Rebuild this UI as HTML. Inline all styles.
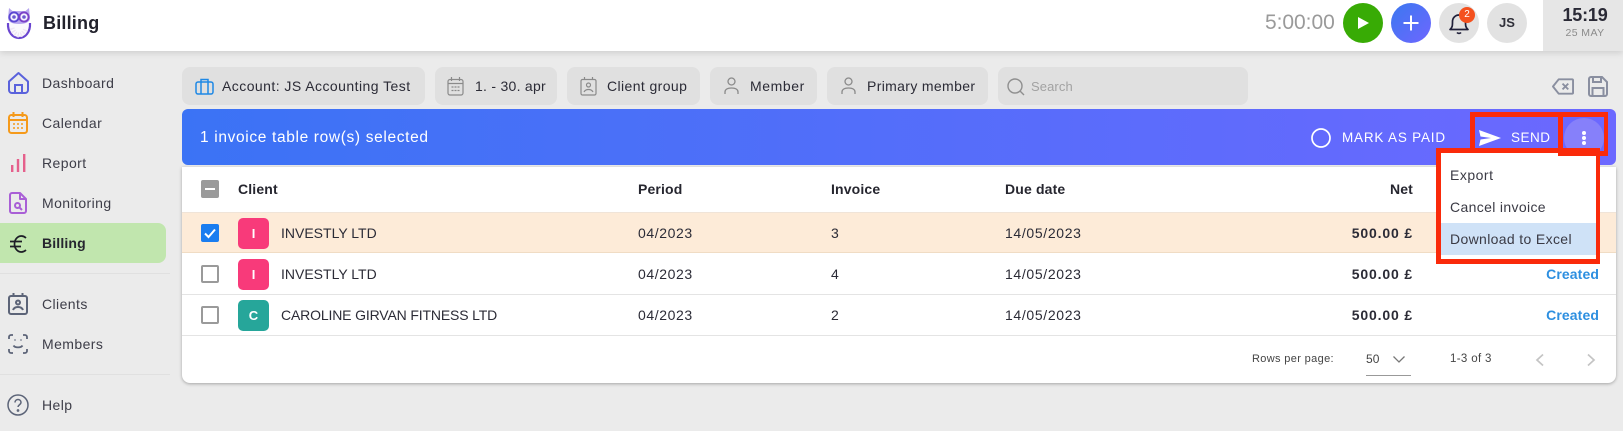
<!DOCTYPE html>
<html><head><meta charset="utf-8"><style>
html,body{margin:0;padding:0;width:1623px;height:431px;overflow:hidden;background:#ebebeb;font-family:"Liberation Sans",sans-serif;color:#2b2b36}
.a{position:absolute;white-space:nowrap}
.t{position:absolute;white-space:nowrap;line-height:20px;font-size:14px;letter-spacing:.45px}
.nav{left:42px;color:#3d3d48;font-size:14px;letter-spacing:.42px}
.chip{position:absolute;top:67px;height:38px;background:#e0e0e0;border-radius:8px}
.hd{font-weight:bold;letter-spacing:.15px;color:#26262f}
.r{text-align:right}
.av{position:absolute;left:238px;width:31px;height:31px;border-radius:5px;color:#fff;font-weight:bold;font-size:13px;line-height:31px;text-align:center}
.cb{position:absolute;left:201px;width:14px;height:14px;border:2px solid #9a9a9a;border-radius:2px;background:#fff}
svg{position:absolute;overflow:visible}
.red{position:absolute;background:#fa2a0a}
</style></head><body>
<div class="a" style="left:0;top:0;width:1623px;height:51px;background:#fff;box-shadow:0 2px 6px rgba(0,0,0,.12)"></div>
<div class="a" style="left:1543px;top:0;width:80px;height:51px;background:#e6e6e6"></div>

<svg style="left:6px;top:8px" width="26" height="32" viewBox="0 0 26 32">
<path d="M2 15c-.5 9 4.500 15 11 15s11.500-6 11-15" fill="#fbf9fd" stroke="#6a45d0" stroke-width="2.200"/>
<path d="M6 20c1 4 4 7 7 7s6-3 7-7" fill="none" stroke="#efe6f4" stroke-width="5" stroke-dasharray="1.500 1.500"/>
<path d="M3 0l3.500 3h13L23 0l1 10c0 4-4 6-11 6S2 14 2 10z" fill="#b7a6ee"/>
<circle cx="8" cy="9" r="4.600" fill="#f4f1fd" stroke="#5b46d2" stroke-width="1.900"/><circle cx="18" cy="9" r="4.600" fill="#f4f1fd" stroke="#7a40c8" stroke-width="1.900"/>
<circle cx="8" cy="9" r="1.800" fill="#6a5ad0"/><circle cx="18" cy="9" r="1.800" fill="#6a5ad0"/>
</svg>
<div class="t" style="left:43px;top:13px;font-size:18px;font-weight:bold;letter-spacing:.2px;color:#22222c">Billing</div>

<div class="t" style="left:1265px;top:11px;font-size:21px;letter-spacing:-.05px;line-height:24px;color:#9a9a9a">5:00:00</div>
<div class="a" style="left:1343px;top:3px;width:40px;height:40px;border-radius:50%;background:#38ab05"></div>
<svg style="left:1343px;top:3px" width="40" height="40"><path d="M15 14v12l11-6z" fill="#fff"/></svg>
<div class="a" style="left:1391px;top:3px;width:40px;height:40px;border-radius:50%;background:linear-gradient(135deg,#3b78f0,#6e66ff)"></div>
<svg style="left:1391px;top:3px" width="40" height="40"><path d="M20 12.500v15M12.500 20h15" stroke="#fff" stroke-width="2" fill="none"/></svg>
<div class="a" style="left:1439px;top:3px;width:40px;height:40px;border-radius:50%;background:#e2e2e2"></div>
<svg style="left:1439px;top:3px" width="40" height="40"><path d="M11 26.500c2.500-2 2.500-4 2.500-8a6.500 6.500 0 0 1 13 0c0 4 0 6 2.500 8z" fill="none" stroke="#20203a" stroke-width="1.700" stroke-linejoin="round"/><path d="M18 29.500c1 1.200 3 1.200 4 0" fill="none" stroke="#20203a" stroke-width="1.700"/></svg>
<div class="a" style="left:1459px;top:7px;width:16px;height:16px;border-radius:50%;background:#f4511e;color:#fff;font-size:10px;line-height:16px;text-align:center">2</div>
<div class="a" style="left:1487px;top:3px;width:40px;height:40px;border-radius:50%;background:#e2e2e2;font-size:13px;font-weight:bold;line-height:40px;text-align:center;color:#30303a">JS</div>
<div class="t" style="left:1545px;width:80px;top:4px;text-align:center;font-size:18px;font-weight:bold;line-height:22px;letter-spacing:-.2px;color:#2a2a36">15:19</div>
<div class="t" style="left:1545px;width:80px;top:23px;text-align:center;font-size:10.500px;letter-spacing:.4px;color:#8b8b8b">25 MAY</div>

<svg style="left:8px;top:72px" width="21" height="22" viewBox="0 0 21 22" fill="none" stroke="#5a62dc" stroke-width="2"><path d="M1 9.500L10.500 1 20 9.500V18a3 3 0 0 1-3 3H4a3 3 0 0 1-3-3z" stroke-linejoin="round"/><path d="M7 21v-8h7v8"/></svg>
<div class="t nav" style="top:73px">Dashboard</div>
<svg style="left:8px;top:112px" width="20" height="22" viewBox="0 0 20 22" fill="none" stroke="#f59a1b" stroke-width="2"><rect x="1" y="3" width="18" height="18" rx="2.500"/><path d="M1 8h18M5.500 0v5M14.500 0v5"/><path d="M5 12h2M9 12h2M13 12h2M5 16h2M9 16h2M13 16h2" stroke-width="1.500"/></svg>
<div class="t nav" style="top:113px">Calendar</div>
<svg style="left:10px;top:154px" width="16" height="18" viewBox="0 0 16 18"><rect x="1" y="11" width="2.400" height="7" fill="#e5608c"/><rect x="6.800" y="5" width="2.400" height="13" fill="#e5608c"/><rect x="13" y="0" width="2.400" height="18" fill="#e5608c"/></svg>
<div class="t nav" style="top:153px">Report</div>
<svg style="left:9px;top:192px" width="18" height="22" viewBox="0 0 18 22" fill="none" stroke="#a95fd6" stroke-width="2"><path d="M11 1H3a2 2 0 0 0-2 2v16a2 2 0 0 0 2 2h12a2 2 0 0 0 2-2V7zM11 1v6h6" stroke-linejoin="round"/><circle cx="8.500" cy="13.500" r="2.500"/><path d="M10.500 15.500L13 18"/></svg>
<div class="t nav" style="top:193px">Monitoring</div>

<div class="a" style="left:-8px;top:223px;width:174px;height:40px;border-radius:8px;background:#c1e6ae"></div>
<svg style="left:9px;top:235px" width="18" height="18" viewBox="0 0 18 18" fill="none" stroke="#1d1d26" stroke-width="1.700"><path d="M17 3C15.500 1.600 14 1 12.500 1 8.500 1 5.500 4.500 5.500 9s3 8 7 8c1.500 0 3-.6 4.500-2"/><path d="M1 6.500h12M1 11.500h11"/></svg>
<div class="t nav" style="top:233px;font-weight:bold;letter-spacing:.15px;color:#26262f">Billing</div>
<div class="a" style="left:0;top:273px;width:170px;height:1px;background:#e0e0e0"></div>

<svg style="left:8px;top:293px" width="20" height="22" viewBox="0 0 20 22" fill="none" stroke="#5c6478" stroke-width="2"><rect x="1" y="3" width="18" height="18" rx="2"/><path d="M5.500 0v3M14.500 0v3"/><circle cx="10" cy="9.500" r="2"/><path d="M5 17c1-2.500 3-3 5-3s4 .5 5 3"/></svg>
<div class="t nav" style="top:294px">Clients</div>
<svg style="left:8px;top:334px" width="20" height="20" viewBox="0 0 20 20" fill="none" stroke="#5c6478" stroke-width="1.800"><path d="M1 5V3a2 2 0 0 1 2-2h2M15 1h2a2 2 0 0 1 2 2v2M1 15v2a2 2 0 0 0 2 2h2M19 15v2a2 2 0 0 1-2 2h-2"/><path d="M5.500 11.500c1.500 2.500 7.500 2.500 9 0"/><path d="M7 5.500v1M13 5.500v1"/></svg>
<div class="t nav" style="top:334px">Members</div>
<div class="a" style="left:0;top:374px;width:170px;height:1px;background:#e0e0e0"></div>
<svg style="left:7px;top:394px" width="22" height="22" viewBox="0 0 22 22" fill="none" stroke="#5c6478" stroke-width="1.500"><circle cx="11" cy="11" r="10"/><path d="M8 8.500c0-4 6-4 6 0 0 2-3 2.500-3 4.500"/><circle cx="11" cy="16.500" r=".6"/></svg>
<div class="t nav" style="top:395px">Help</div>

<div class="chip" style="left:182px;width:243px"></div>
<svg style="left:195px;top:78px" width="19" height="17" viewBox="0 0 19 17" fill="none" stroke="#1e88e5" stroke-width="1.500"><rect x="1" y="4" width="17" height="12" rx="2"/><path d="M6 4V1.500h7V4M6 4v12M13 4v12"/></svg>
<div class="t" style="left:222px;top:76px">Account: JS Accounting Test</div>
<div class="chip" style="left:435px;width:122px"></div>
<svg style="left:447px;top:77px" width="17" height="19" viewBox="0 0 17 19" fill="none" stroke="#8a8a8a" stroke-width="1.200"><rect x="1" y="2.500" width="15" height="15.500" rx="2"/><path d="M1 6.500h15M4.500 0v4M12.500 0v4M4.500 10h2M7.500 10h2M10.500 10h2M4.500 13.500h2M7.500 13.500h2M10.500 13.500h2"/></svg>
<div class="t" style="left:475px;top:76px;letter-spacing:.27px">1. - 30. apr</div>
<div class="chip" style="left:567px;width:133px"></div>
<svg style="left:580px;top:77px" width="17" height="19" viewBox="0 0 17 19" fill="none" stroke="#8a8a8a" stroke-width="1.200"><rect x="1" y="2.500" width="15" height="15.500" rx="1.500"/><path d="M4.500 0v3M12.500 0v3"/><circle cx="8.500" cy="8" r="2"/><path d="M4 15c1-2 2.500-2.500 4.500-2.500s3.500.5 4.500 2.500"/></svg>
<div class="t" style="left:607px;top:76px;letter-spacing:.4px">Client group</div>
<div class="chip" style="left:710px;width:107px"></div>
<svg style="left:724px;top:77px" width="15" height="18" viewBox="0 0 15 18" fill="none" stroke="#8a8a8a" stroke-width="1.300"><circle cx="7.500" cy="4.500" r="3.500"/><path d="M1 17v-2c0-2.500 2.500-4 6.500-4s6.500 1.500 6.500 4v2"/></svg>
<div class="t" style="left:750px;top:76px;letter-spacing:.6px">Member</div>
<div class="chip" style="left:827px;width:161px"></div>
<svg style="left:841px;top:77px" width="15" height="18" viewBox="0 0 15 18" fill="none" stroke="#8a8a8a" stroke-width="1.300"><circle cx="7.500" cy="4.500" r="3.500"/><path d="M1 17v-2c0-2.500 2.500-4 6.500-4s6.500 1.500 6.500 4v2"/></svg>
<div class="t" style="left:867px;top:76px;letter-spacing:.35px">Primary member</div>
<div class="chip" style="left:998px;width:250px"></div>
<svg style="left:1007px;top:78px" width="18" height="18" viewBox="0 0 18 18" fill="none" stroke="#8f8f8f" stroke-width="1.400"><circle cx="8" cy="8" r="7"/><path d="M13 13l4 4"/></svg>
<div class="t" style="left:1031px;top:77px;font-size:13px;letter-spacing:.1px;color:#a2a2a2">Search</div>
<svg style="left:1552px;top:78px" width="22" height="17" viewBox="0 0 23 17" fill="none" stroke="#8a8fa0" stroke-width="2"><path d="M7 1h14a1 1 0 0 1 1 1v13a1 1 0 0 1-1 1H7L1 8.500z" stroke-linejoin="round"/><path d="M11 5.500l6 6M17 5.500l-6 6"/></svg>
<svg style="left:1588px;top:76px" width="20" height="21" viewBox="0 0 20 21" fill="none" stroke="#8a8fa0" stroke-width="2"><path d="M1 3a2 2 0 0 1 2-2h11l5 5v12a2 2 0 0 1-2 2H3a2 2 0 0 1-2-2z"/><path d="M5 1v5h8V1M4.500 20v-8h11v8"/></svg>

<div class="a" style="left:182px;top:167px;width:1434px;height:216px;background:#fff;border-radius:0 0 8px 8px;box-shadow:0 1px 3px rgba(0,0,0,.3)"></div>
<div class="a" style="left:182px;top:109px;width:1434px;height:56px;border-radius:6px;background:linear-gradient(90deg,#3b73f5 0%,#6c68ff 100%)"></div>
<div class="t" style="left:200px;top:128px;font-size:15.500px;letter-spacing:.65px;color:#fff">1 invoice table row(s) selected</div>
<svg style="left:1311px;top:128px" width="20" height="20"><circle cx="10" cy="10" r="9" fill="none" stroke="#fff" stroke-width="1.700"/></svg>
<div class="t" style="left:1342px;top:128px;font-size:13.500px;letter-spacing:.8px;color:#fff">MARK AS PAID</div>
<svg style="left:1479px;top:130px" width="22" height="16" viewBox="0 0 22 16"><path d="M0 0l22 8L0 16l1.500-6.500L12 8 1.500 6.500z" fill="#fff"/></svg>
<div class="t" style="left:1511px;top:128px;font-size:13.500px;letter-spacing:.5px;color:#fff">SEND</div>
<div class="a" style="left:1564px;top:118px;width:40px;height:40px;border-radius:50%;background:#8680fa"></div>
<div class="a" style="left:1582px;top:131px;width:4px;height:4px;border-radius:50%;background:#fff;box-shadow:0 5px 0 #fff,0 10px 0 #fff"></div>

<div class="t hd" style="left:238px;top:179px">Client</div>
<div class="t hd" style="left:638px;top:179px">Period</div>
<div class="t hd" style="left:831px;top:179px">Invoice</div>
<div class="t hd" style="left:1005px;top:179px">Due date</div>
<div class="t hd r" style="right:210px;top:179px">Net</div>
<div class="a" style="left:201px;top:180px;width:18px;height:18px;border-radius:2px;background:#9a9a9a"></div>
<div class="a" style="left:205px;top:188px;width:10px;height:2px;background:#fff"></div>

<div class="a" style="left:182px;top:212px;width:1434px;height:41px;background:#fdebd8;box-shadow:inset 0 -1px 0 #f0dcc4,inset 0 1px 0 #f0e4d8"></div>
<div class="a" style="left:182px;top:294px;width:1434px;height:1px;background:#e4e4e4"></div>
<div class="a" style="left:182px;top:335px;width:1434px;height:1px;background:#e4e4e4"></div>

<div class="a" style="left:201px;top:224px;width:18px;height:18px;border-radius:2px;background:#1a7df0"></div>
<svg style="left:201px;top:224px" width="18" height="18"><path d="M4 9.500l3.500 3.500L14 5.500" fill="none" stroke="#fff" stroke-width="2"/></svg>
<div class="cb" style="top:265px"></div>
<div class="cb" style="top:306px"></div>
<div class="av" style="top:218px;background:#f83a7a">I</div>
<div class="av" style="top:259px;background:#f83a7a">I</div>
<div class="av" style="top:300px;background:#26a69a">C</div>

<div class="t" style="left:281px;top:223px;letter-spacing:0">INVESTLY LTD</div>
<div class="t" style="left:281px;top:264px;letter-spacing:0">INVESTLY LTD</div>
<div class="t" style="left:281px;top:305px;letter-spacing:-.15px">CAROLINE GIRVAN FITNESS LTD</div>
<div class="t" style="left:638px;top:223px;letter-spacing:.6px">04/2023</div>
<div class="t" style="left:638px;top:264px;letter-spacing:.6px">04/2023</div>
<div class="t" style="left:638px;top:305px;letter-spacing:.6px">04/2023</div>
<div class="t" style="left:831px;top:223px">3</div>
<div class="t" style="left:831px;top:264px">4</div>
<div class="t" style="left:831px;top:305px">2</div>
<div class="t" style="left:1005px;top:223px;letter-spacing:.65px">14/05/2023</div>
<div class="t" style="left:1005px;top:264px;letter-spacing:.65px">14/05/2023</div>
<div class="t" style="left:1005px;top:305px;letter-spacing:.65px">14/05/2023</div>
<div class="t r" style="right:210px;top:223px;font-weight:bold;letter-spacing:.85px">500.00 £</div>
<div class="t r" style="right:210px;top:264px;font-weight:bold;letter-spacing:.85px">500.00 £</div>
<div class="t r" style="right:210px;top:305px;font-weight:bold;letter-spacing:.85px">500.00 £</div>
<div class="t r" style="right:24px;top:264px;font-weight:bold;letter-spacing:.1px;color:#2d8fe0">Created</div>
<div class="t r" style="right:24px;top:305px;font-weight:bold;letter-spacing:.1px;color:#2d8fe0">Created</div>

<div class="t" style="left:1252px;top:349px;font-size:11px;letter-spacing:.35px;color:#444">Rows per page:</div>
<div class="t" style="left:1366px;top:349px;font-size:12px;letter-spacing:.1px;color:#444">50</div>
<svg style="left:1393px;top:356px" width="12" height="7"><path d="M.5.500L6 6l5.500-5.500" fill="none" stroke="#777" stroke-width="1.300"/></svg>
<div class="a" style="left:1366px;top:375px;width:45px;height:1px;background:#999"></div>
<div class="t" style="left:1450px;top:349px;font-size:11.500px;letter-spacing:.35px;color:#444">1-3 of 3</div>
<svg style="left:1536px;top:354px" width="8" height="12"><path d="M7 .5L1 6l6 5.500" fill="none" stroke="#c4c4c4" stroke-width="1.700"/></svg>
<svg style="left:1587px;top:354px" width="8" height="12"><path d="M1 .5L7 6l-6 5.500" fill="none" stroke="#c4c4c4" stroke-width="1.700"/></svg>

<div class="a" style="left:1441px;top:153px;width:155px;height:106px;background:#fff"></div>
<div class="a" style="left:1441px;top:223px;width:155px;height:32px;background:#cfe2f7"></div>
<div class="t" style="left:1450px;top:165px;letter-spacing:.5px;color:#3a3a44">Export</div>
<div class="t" style="left:1450px;top:197px;letter-spacing:.35px;color:#3a3a44">Cancel invoice</div>
<div class="t" style="left:1450px;top:229px;letter-spacing:.35px;color:#3a3a44">Download to Excel</div>

<div class="red" style="left:1470px;top:112px;width:138px;height:5px"></div>
<div class="red" style="left:1470px;top:112px;width:5px;height:36px"></div>
<div class="red" style="left:1558px;top:112px;width:5px;height:36px"></div>
<div class="red" style="left:1604px;top:112px;width:4px;height:44px"></div>
<div class="red" style="left:1558px;top:151px;width:50px;height:5px"></div>
<div class="red" style="left:1436px;top:148px;width:164px;height:5px"></div>
<div class="red" style="left:1436px;top:259px;width:164px;height:5px"></div>
<div class="red" style="left:1436px;top:148px;width:5px;height:116px"></div>
<div class="red" style="left:1596px;top:148px;width:4px;height:116px"></div>
</body></html>
